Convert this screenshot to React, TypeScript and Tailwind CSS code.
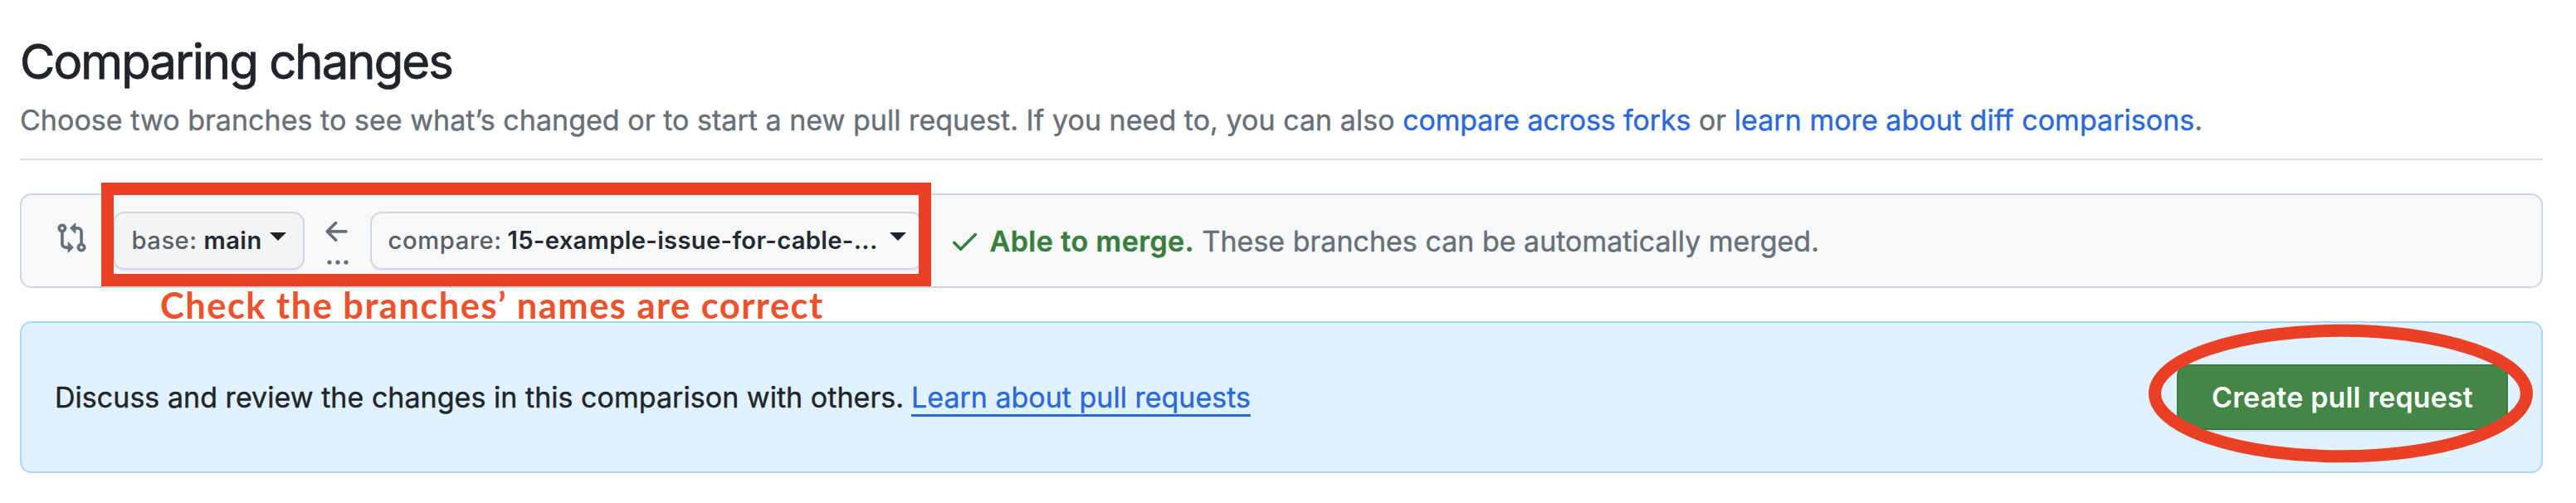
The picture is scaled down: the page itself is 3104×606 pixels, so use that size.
type IconProps = { className?: string };

const CompareIcon = ({ className }: IconProps) => (
  <svg viewBox="0 0 16 16" className={className} fill="currentColor">
    <path d="M9.573.677A.25.25 0 0 1 10 .854V2.5h1A2.5 2.5 0 0 1 13.5 5v5.628a2.251 2.251 0 1 1-1.5 0V5a1 1 0 0 0-1-1h-1v1.646a.25.25 0 0 1-.427.177L7.177 3.427a.25.25 0 0 1 0-.354L9.573.677ZM6 12v-1.646a.25.25 0 0 1 .427-.177l2.396 2.396a.25.25 0 0 1 0 .354l-2.396 2.396A.25.25 0 0 1 6 15.146V13.5H5A2.5 2.5 0 0 1 2.5 11V5.372a2.25 2.25 0 1 1 1.5 0V11a1 1 0 0 0 1 1h1ZM4 3.25a.75.75 0 1 0-1.5 0 .75.75 0 0 0 1.5 0Zm8.75 8.75a.75.75 0 1 0 0 1.5.75.75 0 0 0 0-1.5Z" />
  </svg>
);

const ArrowLeftIcon = ({ className }: IconProps) => (
  <svg viewBox="0 0 16 16" className={className} fill="currentColor">
    <path d="M7.78 12.53a.75.75 0 0 1-1.06 0L2.47 8.28a.75.75 0 0 1 0-1.06l4.25-4.25a.751.751 0 0 1 1.042.018.751.751 0 0 1 .018 1.042L4.81 7h7.44a.75.75 0 0 1 0 1.5H4.81l2.97 2.97a.75.75 0 0 1 0 1.06Z" />
  </svg>
);

const CheckIcon = ({ className }: IconProps) => (
  <svg viewBox="0 0 16 16" className={className} fill="currentColor">
    <path d="M13.78 4.22a.75.75 0 0 1 0 1.06l-7.25 7.25a.75.75 0 0 1-1.06 0L2.22 9.28a.751.751 0 0 1 .018-1.042.751.751 0 0 1 1.042-.018L6 10.94l6.72-6.72a.75.75 0 0 1 1.06 0Z" />
  </svg>
);

const Caret = ({ className }: IconProps) => (
  <svg viewBox="0 0 20 10" className={className} fill="#212529">
    <path d="M0 0h20L10 10z" />
  </svg>
);

export default function App() {
  return (
    <main className="relative h-[606px] w-[3104px] overflow-hidden whitespace-nowrap bg-white pr-10 pl-6 pt-[43px] font-['Inter',sans-serif] text-[34px] text-[#676f78]">
      <header className="h-[150px] border-b-2 border-[#d8dee3] pt-px">
        <h1 className="h-[60px] text-[58px] leading-[60px] tracking-[-1.94px] text-[#212529] [-webkit-text-stroke:0.8px]">Comparing changes</h1>
        <p className="mt-4 h-[50px] leading-[50px] tracking-[0.03px] [-webkit-text-stroke:0.4px]">
          Choose two branches to see what’s changed or to start a new pull request. If you need to, you can also{" "}
          <a className="tracking-[-0.14px] text-[#2a69d6]">compare across forks</a> or{" "}
          <a className="text-[#2a69d6]">learn more about diff comparisons</a>.
        </p>
      </header>

      <section className="mt-10 flex h-[114px] items-center rounded-[14px] border-2 border-[#d0d6dd] bg-[#f6f8fa]">
        <CompareIcon className="relative -top-[4px] ml-[40.5px] size-[39px]" />
        <button className="ml-[30px] flex h-[70px] w-[231px] items-center rounded-[14px] border-2 border-[#d4d7da] bg-[#f3f4f6] pl-[21px] text-[29.2px] shadow-[0_2px_1px_rgba(31,35,40,0.05)]">
          <span className="w-[87px] text-left font-medium tracking-[0.5px] text-[#5a6067]">base:</span>
          <span className="w-[79px] text-left font-semibold tracking-[0.4px] text-[#24292f]">main</span>
          <Caret className="relative -top-[5px] h-[10px] w-5" />
        </button>
        <div className="ml-[20px] flex h-[70px] w-[39px] flex-col items-center">
          <ArrowLeftIcon className="mt-[5px] size-[39px]" />
          <svg viewBox="0 0 26 6" className="mt-[14px] ml-[1px] h-[6px] w-[26px]" fill="currentColor">
            <circle cx="3" cy="3" r="2.6" />
            <circle cx="13" cy="3" r="2.6" />
            <circle cx="23" cy="3" r="2.6" />
          </svg>
        </div>
        <button className="ml-[20px] flex h-[70px] w-[666px] items-center rounded-[14px] border-2 border-[#d4d7da] bg-[#f6f8fa] pl-[20px] text-[29.2px] shadow-[0_2px_1px_rgba(31,35,40,0.05)]">
          <span className="w-[144px] text-left font-medium tracking-[0.65px] text-[#5a6067]">compare:</span>
          <span className="w-[460px] text-left font-semibold tracking-[0.31px] text-[#24292f]">15-example-issue-for-cable-...</span>
          <Caret className="relative -top-[5px] h-[10px] w-5" />
        </button>
        <CheckIcon className="ml-[31px] size-[39px] text-[#397e3e]" />
        <p className="relative top-[0.5px] ml-[11px] leading-[50px] [-webkit-text-stroke:0.4px]">
          <strong className="font-semibold tracking-[0.45px] text-[#397e3e]">Able to merge.</strong>{" "}
          These branches can be automatically merged.
        </p>
      </section>

      <section className="mt-10 flex h-[183px] items-center justify-between rounded-[14px] border-2 border-[#add6ff] bg-[#e0f2ff] pr-10 pl-10 text-[#212529]">
        <p className="flex leading-[50px] [-webkit-text-stroke:0.4px]">
          <span className="w-[1032px] tracking-[0.03px]">Discuss and review the changes in this comparison with others.</span>
          <a className="h-[48px] border-b-[3px] border-[#2a69d6] text-[#2a69d6]">Learn about pull requests</a>
        </p>
        <button className="h-[79px] w-[399px] rounded-[14px] border-2 border-[#3d7741] bg-[#438646] font-semibold tracking-[0.15px] text-white shadow-[0_2px_1px_rgba(31,35,40,0.12)]">
          Create pull request
        </button>
      </section>

      <div className="absolute top-[220px] left-[122px] h-[125px] w-[1000px] border-[15px] border-[#ea4025]" />
      <p className="absolute top-[341px] left-[193px] font-['Lato',sans-serif] text-[43.5px] leading-[52px] font-bold tracking-[1.45px] text-[#ee522d]">
        Check the branches’ names are correct
      </p>
      <svg viewBox="0 0 464 168" className="absolute top-[390px] left-[2589px] h-[168px] w-[464px]" fill="none">
        <ellipse cx="231.5" cy="84" rx="224" ry="75.8" stroke="#ea4025" strokeWidth="15" />
      </svg>
    </main>
  );
}
